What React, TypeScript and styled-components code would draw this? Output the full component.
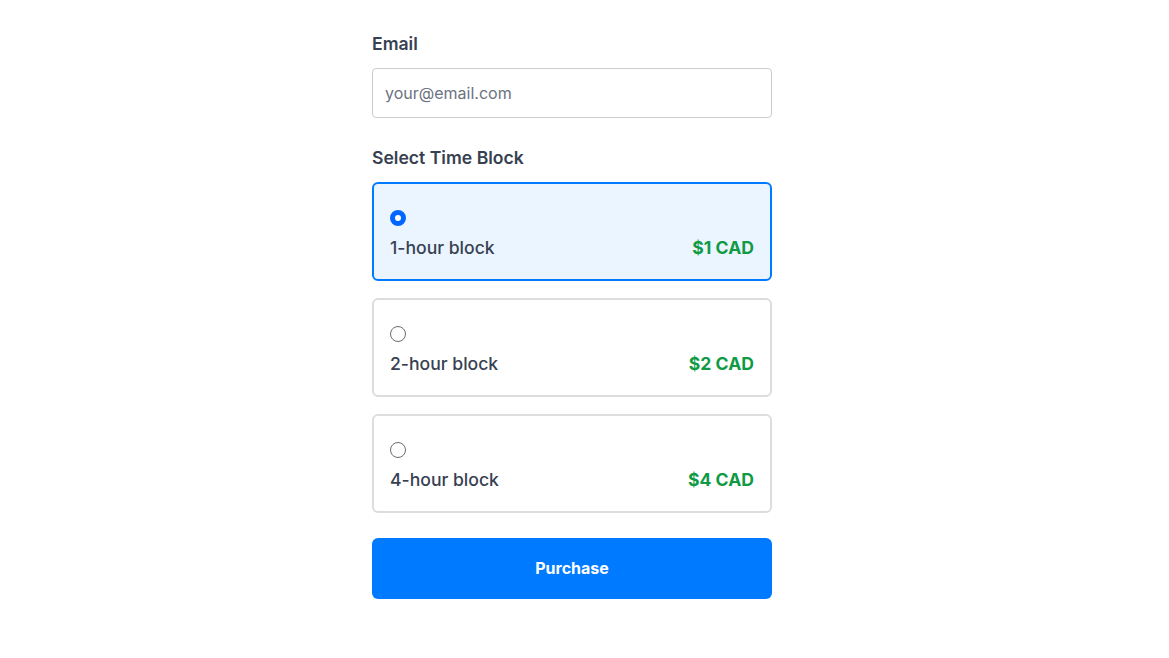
import React, { useState } from "react";
import styled, { createGlobalStyle } from "styled-components";

const Global = createGlobalStyle`
  html, body { margin: 0; padding: 0; background: #ffffff; }
  body { font-family: Inter, "Noto Sans", sans-serif; }
  * { box-sizing: border-box; }
`;

const Page = styled.div`
  padding: 32px 25px 40px 0;
`;

const Form = styled.form`
  width: 400px;
  margin: 0 auto;
  display: flex;
  flex-direction: column;
`;

const Label = styled.label`
  display: block;
  font-size: 17.6px;
  line-height: 24px;
  font-weight: 600;
  color: #374151;
  margin-bottom: 12px;
`;

const Input = styled.input`
  width: 100%;
  height: 50px;
  border: 1px solid #cccccc;
  border-radius: 4px;
  padding: 0 12px;
  font-family: inherit;
  font-size: 16px;
  color: #374151;
  margin-bottom: 28px;
  &::placeholder { color: #6b7280; }
`;

const Options = styled.div`
  display: flex;
  flex-direction: column;
  gap: 17px;
  margin-bottom: 25px;
`;

const Card = styled.label<{ $selected: boolean }>`
  display: flex;
  flex-direction: column;
  border: 2px solid ${(p) => (p.$selected ? "#007bff" : "#dddddd")};
  background: ${(p) => (p.$selected ? "#ebf5ff" : "#ffffff")};
  border-radius: 6px;
  padding: 26px 16px 18px;
  cursor: pointer;
`;

const Radio = styled.input`
  appearance: none;
  -webkit-appearance: none;
  width: 16px;
  height: 16px;
  margin: 0 0 9px 0;
  border-radius: 50%;
  border: 1px solid #6b6b6b;
  background: #ffffff;
  &:checked {
    border: 5px solid #0066ff;
    background: #ffffff;
  }
`;

const Row = styled.div`
  display: flex;
  justify-content: space-between;
  align-items: center;
  line-height: 26px;
  font-size: 17.6px;
`;

const Name = styled.span`
  color: #374151;
  font-weight: 500;
`;

const Price = styled.span`
  color: #109a45;
  font-weight: 700;
`;

const Button = styled.button`
  height: 61px;
  border: none;
  border-radius: 6px;
  background: #007bff;
  color: #ffffff;
  font-family: inherit;
  font-size: 16px;
  line-height: 20px;
  font-weight: 700;
  padding: 0 0 2px;
  cursor: pointer;
`;

const blocks = [
  { id: "1", name: "1-hour block", price: "$1 CAD" },
  { id: "2", name: "2-hour block", price: "$2 CAD" },
  { id: "4", name: "4-hour block", price: "$4 CAD" },
];

export default function App() {
  const [sel, setSel] = useState("1");
  return (
    <>
      <Global />
      <Page>
        <Form onSubmit={(e) => e.preventDefault()}>
          <Label htmlFor="email">Email</Label>
          <Input id="email" type="email" placeholder="your@email.com" />
          <Label>Select Time Block</Label>
          <Options>
            {blocks.map((b) => (
              <Card key={b.id} $selected={sel === b.id}>
                <Radio
                  type="radio"
                  name="block"
                  checked={sel === b.id}
                  onChange={() => setSel(b.id)}
                />
                <Row>
                  <Name>{b.name}</Name>
                  <Price>{b.price}</Price>
                </Row>
              </Card>
            ))}
          </Options>
          <Button type="submit">Purchase</Button>
        </Form>
      </Page>
    </>
  );
}
